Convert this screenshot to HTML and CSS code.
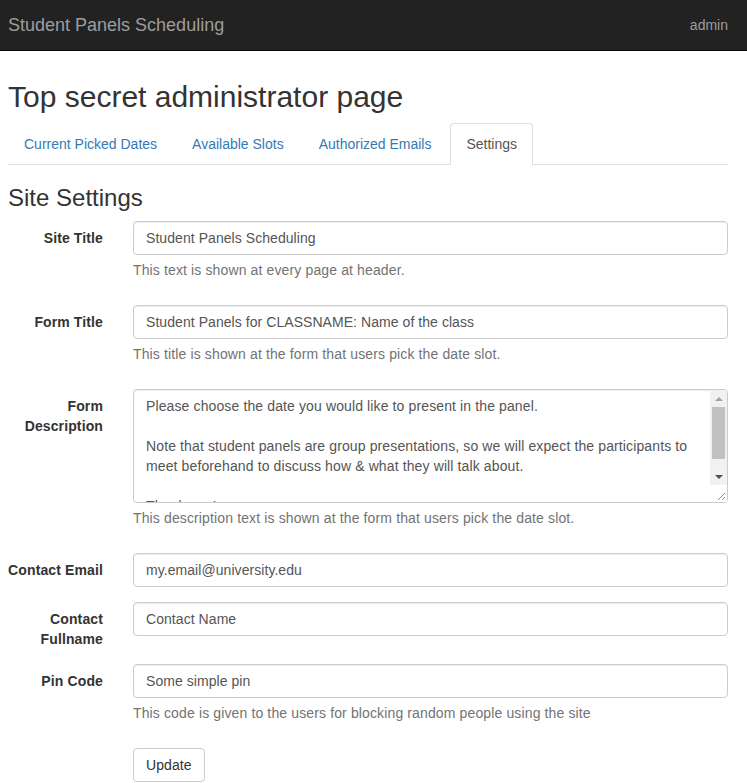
FILE: index.html
```html
<!DOCTYPE html>
<html>
<head>
<meta charset="utf-8">
<title>Admin</title>
<link rel="stylesheet" href="styles.css">
</head>
<body>
<nav class="navbar">
  <span class="brand">Student Panels Scheduling</span>
  <span class="nav-user">admin</span>
</nav>
<main class="page">
  <h2 class="page-title">Top secret administrator page</h2>
  <ul class="tabs">
    <li class="tab"><a href="#">Current Picked Dates</a></li>
    <li class="tab"><a href="#">Available Slots</a></li>
    <li class="tab"><a href="#">Authorized Emails</a></li>
    <li class="tab active"><a href="#">Settings</a></li>
  </ul>
  <h3 class="section-title">Site Settings</h3>
  <form class="settings-form">
    <div class="form-group">
      <label class="control-label">Site Title</label>
      <div class="field">
        <input class="form-control" type="text" value="Student Panels Scheduling">
        <p class="help">This text is shown at every page at header.</p>
      </div>
    </div>
    <div class="form-group">
      <label class="control-label">Form Title</label>
      <div class="field">
        <input class="form-control" type="text" value="Student Panels for CLASSNAME: Name of the class">
        <p class="help">This title is shown at the form that users pick the date slot.</p>
      </div>
    </div>
    <div class="form-group">
      <label class="control-label">Form Description</label>
      <div class="field">
        <div class="textarea-wrap">
          <textarea class="form-control textarea" rows="5">Please choose the date you would like to present in the panel.

Note that student panels are group presentations, so we will expect the participants to meet beforehand to discuss how &amp; what they will talk about.

Thank you!

Please be on time.</textarea>
          <div class="scrollbar" aria-hidden="true">
            <div class="sb-btn"><span class="arrow-up"></span></div>
            <div class="sb-track"><div class="sb-thumb"></div></div>
            <div class="sb-btn"><span class="arrow-down"></span></div>
            <div class="sb-corner">
              <svg width="17" height="17" viewBox="0 0 17 17"><path d="M8 15 L15 8 M12 15 L15 12" stroke="#8a8a8a" stroke-width="1" fill="none"/></svg>
            </div>
          </div>
        </div>
        <p class="help">This description text is shown at the form that users pick the date slot.</p>
      </div>
    </div>
    <div class="form-group">
      <label class="control-label">Contact Email</label>
      <div class="field">
        <input class="form-control" type="text" value="my.email@university.edu">
      </div>
    </div>
    <div class="form-group">
      <label class="control-label">Contact Fullname</label>
      <div class="field">
        <input class="form-control" type="text" value="Contact Name">
      </div>
    </div>
    <div class="form-group">
      <label class="control-label">Pin Code</label>
      <div class="field">
        <input class="form-control" type="text" value="Some simple pin">
        <p class="help">This code is given to the users for blocking random people using the site</p>
      </div>
    </div>
    <div class="form-group last">
      <span class="control-label"></span>
      <div class="field">
        <button type="button" class="btn">Update</button>
      </div>
    </div>
  </form>
</main>
</body>
</html>
```
FILE: styles.css
```css
* { box-sizing: border-box; }
html, body { margin: 0; padding: 0; }
body {
  font-family: "Liberation Sans", Arial, Helvetica, sans-serif;
  font-size: 14px;
  line-height: 1.42857143;
  color: #333;
  background: #fff;
  overflow: hidden;
}
.navbar {
  height: 51px;
  background: #222;
  border-bottom: 1px solid #080808;
  display: flex;
  align-items: center;
  justify-content: space-between;
  padding: 0 19px 1px 8px;
}
.brand {
  font-size: 18px;
  line-height: 20px;
  color: #9d9d9d;
}
.nav-user {
  font-size: 14px;
  line-height: 20px;
  color: #9d9d9d;
}
.page {
  padding: 0 19px 0 8px;
}
.page-title {
  font-size: 30px;
  font-weight: 500;
  line-height: 1.1;
  margin: 29px 0 10px;
  color: #333;
}
.tabs {
  list-style: none;
  margin: 0;
  padding: 0;
  display: flex;
  border-bottom: 1px solid #ddd;
}
.tab {
  margin-bottom: -1px;
  margin-right: 3px;
}
.tab a {
  display: block;
  padding: 10px 15px;
  line-height: 20px;
  border: 1px solid transparent;
  border-radius: 4px 4px 0 0;
  color: #337ab7;
  text-decoration: none;
}
.tab.active a {
  color: #555;
  background: #fff;
  border-color: #ddd #ddd transparent;
}
.section-title {
  font-size: 24px;
  font-weight: 500;
  line-height: 1.1;
  margin: 20px 0 10px;
  color: #333;
}
.form-group {
  display: grid;
  grid-template-columns: 95px 1fr;
  column-gap: 30px;
  margin-bottom: 15px;
}
.form-group.last { margin-bottom: 0; }
.control-label {
  display: block;
  padding-top: 7px;
  font-weight: 700;
  text-align: right;
  letter-spacing: 0.12px;
}
.field { min-width: 0; }
.form-control {
  display: block;
  width: 100%;
  height: 34px;
  padding: 6px 12px;
  font-family: inherit;
  font-size: 14px;
  line-height: 1.42857143;
  color: #555;
  background: #fff;
  border: 1px solid #ccc;
  border-radius: 4px;
  box-shadow: inset 0 1px 1px rgba(0,0,0,.075);
  margin: 0;
  letter-spacing: 0.06px;
}
.textarea-wrap {
  position: relative;
}
.textarea {
  height: 114px;
  resize: none;
  overflow: hidden;
  padding-right: 29px;
  letter-spacing: 0.12px;
}
.scrollbar {
  position: absolute;
  top: 1px;
  right: 1px;
  bottom: 1px;
  width: 17px;
  display: flex;
  flex-direction: column;
  background: #f1f1f1;
  border-top-right-radius: 3px;
}
.sb-btn {
  height: 17px;
  flex: none;
  display: flex;
  align-items: center;
  justify-content: center;
}
.arrow-up {
  width: 0;
  height: 0;
  border-left: 4px solid transparent;
  border-right: 4px solid transparent;
  border-bottom: 4px solid #a3a3a3;
}
.arrow-down {
  width: 0;
  height: 0;
  border-left: 4px solid transparent;
  border-right: 4px solid transparent;
  border-top: 4px solid #505050;
}
.sb-track {
  flex: 1;
  padding: 0 2px;
}
.sb-thumb {
  height: 52px;
  background: #c1c1c1;
}
.sb-corner {
  height: 17px;
  flex: none;
  background: #fff;
  border-bottom-right-radius: 3px;
}
.sb-corner svg { display: block; }
.help {
  margin: 5px 0 10px;
  color: #737373;
  letter-spacing: 0.13px;
}
.btn {
  display: inline-block;
  padding: 6px 12px;
  font-family: inherit;
  font-size: 14px;
  line-height: 1.42857143;
  color: #333;
  background: #fff;
  border: 1px solid #ccc;
  border-radius: 4px;
  cursor: pointer;
  letter-spacing: 0.1px;
}
```
